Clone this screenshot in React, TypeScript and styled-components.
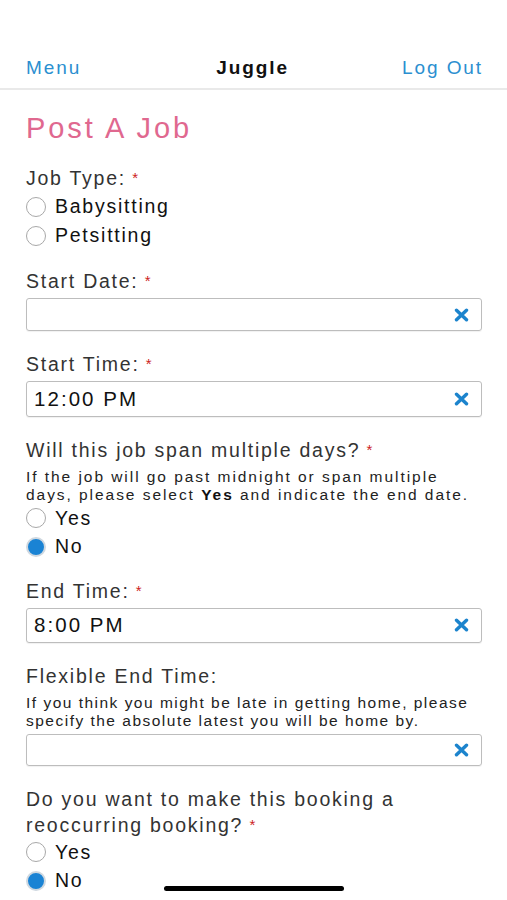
import styled, { createGlobalStyle } from 'styled-components';

const GlobalStyle = createGlobalStyle`
  html, body {
    margin: 0;
    padding: 0;
    background: #ffffff;
  }
  body {
    font-family: "Liberation Sans", Arial, sans-serif;
    color: #333333;
  }
`;

const Screen = styled.div`
  width: 507px;
  height: 900px;
  overflow: hidden;
  position: relative;
  background: #ffffff;
`;

const NavBar = styled.div`
  margin-top: 47px;
  height: 41px;
  display: flex;
  align-items: center;
  justify-content: space-between;
  padding: 0 24px 0 26px;
  border-bottom: 2px solid #e9e9e9;
`;

const NavLink = styled.span`
  color: #2b8fd0;
  font-size: 19px;
  letter-spacing: 0.1em;
`;

const NavTitle = styled.span`
  color: #111111;
  font-size: 19px;
  font-weight: bold;
  letter-spacing: 0.1em;
  margin-left: 22px;
`;

const Content = styled.div`
  padding: 0 25px 0 26px;
`;

const Heading = styled.h1`
  margin: 21px 0 0;
  font-size: 29px;
  font-weight: normal;
  letter-spacing: 0.1em;
  color: #e0688f;
  line-height: 34px;
`;

const Field = styled.div<{ $top: number }>`
  margin-top: ${({ $top }) => $top}px;
`;

const Label = styled.div`
  font-size: 19.5px;
  line-height: 25px;
  letter-spacing: 0.09em;
  color: #333333;
`;

const Star = styled.span`
  color: #cc2222;
  font-size: 15px;
  letter-spacing: 0;
  margin-left: 2px;
  vertical-align: 2px;
`;

const Help = styled.div<{ $spacing: number }>`
  font-size: 15.5px;
  line-height: 18px;
  letter-spacing: ${({ $spacing }) => $spacing}px;
  color: #222222;
  margin-top: 5px;

  b {
    font-weight: bold;
    color: #111111;
  }
`;

const Options = styled.div<{ $top: number }>`
  display: flex;
  flex-direction: column;
  margin-top: ${({ $top }) => $top}px;
`;

const Option = styled.label<{ $h: number }>`
  display: flex;
  align-items: center;
  height: ${({ $h }) => $h}px;
  font-size: 19.5px;
  letter-spacing: 0.09em;
  color: #111111;
`;

const Radio = styled.span<{ $checked?: boolean }>`
  width: 20px;
  height: 20px;
  box-sizing: border-box;
  border-radius: 50%;
  border: ${({ $checked }) => ($checked ? '2px solid #cfd8e0' : '1px solid #a8a8a8')};
  background: ${({ $checked }) => ($checked ? '#1a83d4' : '#ffffff')};
  margin-right: 9px;
  flex-shrink: 0;
`;

const InputBox = styled.div<{ $h: number }>`
  margin-top: 4px;
  height: ${({ $h }) => $h}px;
  box-sizing: border-box;
  border: 1px solid #bdbdbd;
  border-radius: 3px;
  box-shadow: 0 1px 1px rgba(0, 0, 0, 0.06);
  display: flex;
  align-items: center;
  justify-content: space-between;
  padding: 0 12px 0 7px;
`;

const InputValue = styled.span`
  font-size: 20.5px;
  letter-spacing: 0.1em;
  color: #111111;
`;

const ClearIcon = () => (
  <svg width="15" height="14" viewBox="0 0 15 14">
    <path d="M2.5 2.2 L12.5 11.8 M12.5 2.2 L2.5 11.8" stroke="#1c84cd" strokeWidth="3.4" strokeLinecap="round" />
  </svg>
);

const HomeBar = styled.div`
  position: absolute;
  left: 164px;
  top: 886px;
  width: 180px;
  height: 5px;
  border-radius: 3px;
  background: #000000;
`;

type InputProps = { value?: string; h: number };

const DateInput = ({ value, h }: InputProps) => (
  <InputBox $h={h}>
    <InputValue>{value ?? ''}</InputValue>
    <ClearIcon />
  </InputBox>
);

type RadiosProps = { items: string[]; checked?: string; top?: number; h?: number };

const Radios = ({ items, checked, top = 0, h = 29 }: RadiosProps) => (
  <Options $top={top}>
    {items.map((item) => (
      <Option key={item} $h={h}>
        <Radio $checked={item === checked} />
        {item}
      </Option>
    ))}
  </Options>
);

const Required = () => <Star> *</Star>;

export default function App() {
  return (
    <>
      <GlobalStyle />
      <Screen>
        <NavBar>
          <NavLink>Menu</NavLink>
          <NavTitle>Juggle</NavTitle>
          <NavLink>Log Out</NavLink>
        </NavBar>
        <Content>
          <Heading>Post A Job</Heading>

          <Field $top={20}>
            <Label>
              Job Type:<Required />
            </Label>
            <Radios items={['Babysitting', 'Petsitting']} top={1} />
          </Field>

          <Field $top={18}>
            <Label>
              Start Date:<Required />
            </Label>
            <DateInput h={33} />
          </Field>

          <Field $top={20}>
            <Label>
              Start Time:<Required />
            </Label>
            <DateInput h={36} value="12:00 PM" />
          </Field>

          <Field $top={20}>
            <Label>
              Will this job span multiple days?<Required />
            </Label>
            <Help $spacing={1.95}>
              If the job will go past midnight or span multiple days, please select <b>Yes</b> and indicate the end
              date.
            </Help>
            <Radios items={['Yes', 'No']} checked="No" h={28.5} />
          </Field>

          <Field $top={16.5}>
            <Label>
              End Time:<Required />
            </Label>
            <DateInput h={35} value="8:00 PM" />
          </Field>

          <Field $top={21.5}>
            <Label>Flexible End Time:</Label>
            <Help $spacing={1.49}>
              If you think you might be late in getting home, please specify the absolute latest you will be home by.
            </Help>
            <DateInput h={32} />
          </Field>

          <Field $top={21}>
            <Label>
              Do you want to make this booking a reoccurring booking?<Required />
            </Label>
            <Radios items={['Yes', 'No']} checked="No" h={28.5} />
          </Field>
        </Content>
        <HomeBar />
      </Screen>
    </>
  );
}
